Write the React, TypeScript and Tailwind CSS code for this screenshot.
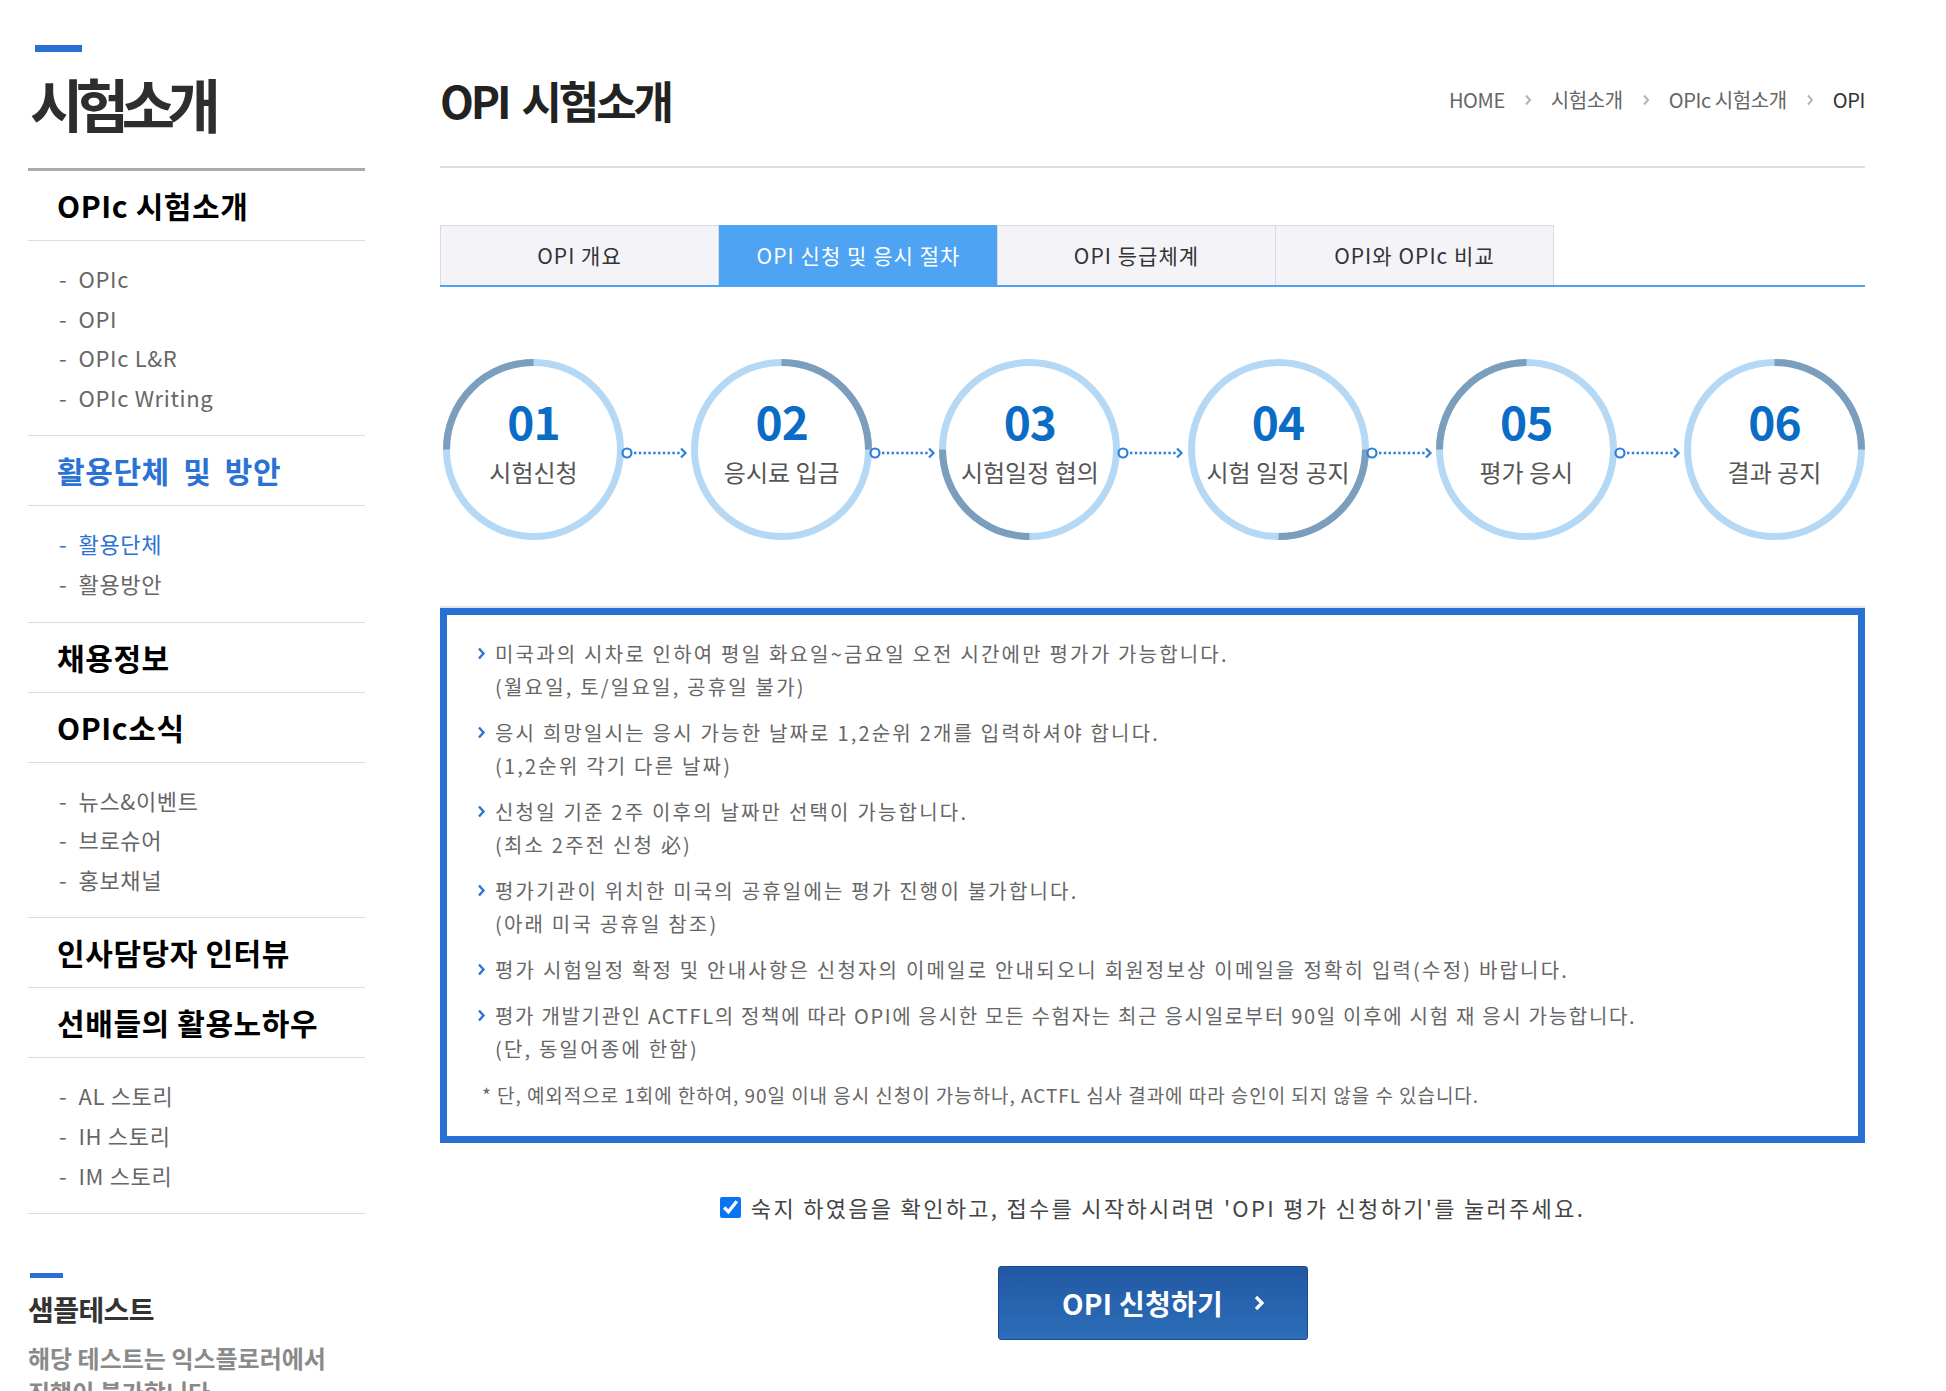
import React from 'react';

const KR = "font-['Noto_Sans_CJK_KR','Noto_Sans',sans-serif]";

type Arc = 'tl' | 'tr' | 'br' | 'bl';

const steps: { no: string; label: string; arc: Arc }[] = [
  { no: '01', label: '시험신청', arc: 'tl' },
  { no: '02', label: '응시료 입금', arc: 'tr' },
  { no: '03', label: '시험일정 협의', arc: 'bl' },
  { no: '04', label: '시험 일정 공지', arc: 'br' },
  { no: '05', label: '평가 응시', arc: 'tl' },
  { no: '06', label: '결과 공지', arc: 'tr' },
];

const arcPath: Record<Arc, string> = {
  tl: 'M 3.5 90.5 A 87 87 0 0 1 90.5 3.5',
  tr: 'M 90.5 3.5 A 87 87 0 0 1 177.5 90.5',
  br: 'M 177.5 90.5 A 87 87 0 0 1 90.5 177.5',
  bl: 'M 90.5 177.5 A 87 87 0 0 1 3.5 90.5',
};

const sideMenu: { title: string; active?: boolean; items?: { label: string; active?: boolean }[] }[] = [
  { title: 'OPIc 시험소개', items: [{ label: 'OPIc' }, { label: 'OPI' }, { label: 'OPIc L&R' }, { label: 'OPIc Writing' }] },
  { title: '활용단체 및 방안', active: true, items: [{ label: '활용단체', active: true }, { label: '활용방안' }] },
  { title: '채용정보' },
  { title: 'OPIc소식', items: [{ label: '뉴스&이벤트' }, { label: '브로슈어' }, { label: '홍보채널' }] },
  { title: '인사담당자 인터뷰' },
  { title: '선배들의 활용노하우', items: [{ label: 'AL 스토리' }, { label: 'IH 스토리' }, { label: 'IM 스토리' }] },
];

const notices: { main: string; sub?: string; tight?: boolean }[] = [
  { main: '미국과의 시차로 인하여 평일 화요일~금요일 오전 시간에만 평가가 가능합니다.', sub: '(월요일, 토/일요일, 공휴일 불가)' },
  { main: '응시 희망일시는 응시 가능한 날짜로 1,2순위 2개를 입력하셔야 합니다.', sub: '(1,2순위 각기 다른 날짜)' },
  { main: '신청일 기준 2주 이후의 날짜만 선택이 가능합니다.', sub: '(최소 2주전 신청 必)' },
  { main: '평가기관이 위치한 미국의 공휴일에는 평가 진행이 불가합니다.', sub: '(아래 미국 공휴일 참조)' },
  { main: '평가 시험일정 확정 및 안내사항은 신청자의 이메일로 안내되오니 회원정보상 이메일을 정확히 입력(수정) 바랍니다.' },
  { main: '평가 개발기관인 ACTFL의 정책에 따라 OPI에 응시한 모든 수험자는 최근 응시일로부터 90일 이후에 시험 재 응시 가능합니다.', sub: '(단, 동일어종에 한함)', tight: true },
];

const tabs = ['OPI 개요', 'OPI 신청 및 응시 절차', 'OPI 등급체계', 'OPI와 OPIc 비교'];

function Sidebar() {
  return (
    <aside className={`w-[337px] shrink-0 pt-[45px] ${KR}`}>
      <div className="ml-[7px] h-[7px] w-[47px] bg-[#2a6fd2]" />
      <h1 className="mt-[22px] pl-[2px] text-[58px] leading-[58px] font-bold tracking-[-0.13em] text-[#2e2e2e]">시험소개</h1>
      <div className="mt-[36px] border-t-[3px] border-[#ababab]" />
      {sideMenu.map((sec) => (
        <div key={sec.title}>
          <div
            className={`flex h-[70px] items-center border-b border-[#dcdcdc] pl-[29px] text-[30px] font-bold tracking-[0.02em] ${
              sec.active ? 'text-[#2a72d4] [word-spacing:6px]' : 'text-black'
            }`}
          >
            {sec.title}
          </div>
          {sec.items && (
            <ul className="border-b border-[#dcdcdc] py-[18px] pl-[31px]">
              {sec.items.map((it) => (
                <li
                  key={it.label}
                  className={`text-[22px] leading-[39.6px] tracking-[0.03em] ${it.active ? 'text-[#2a72d4]' : 'text-[#666]'}`}
                >
                  -&nbsp; {it.label}
                </li>
              ))}
            </ul>
          )}
        </div>
      ))}
      <div className="ml-[2px] mt-[59px] h-[5px] w-[33px] bg-[#2a6fd2]" />
      <h2 className="mt-[13px] text-[28px] leading-[36px] font-bold tracking-[-0.02em] text-[#333]">샘플테스트</h2>
      <p className="mt-[14px] text-[24px] leading-[34px] font-bold tracking-[0em] text-[#8a8a8a]">
        해당 테스트는 익스플로러에서
        <br />
        진행이 불가합니다.
      </p>
    </aside>
  );
}

function Crumb() {
  return (
    <svg width="8" height="12" viewBox="0 0 8 12" className="mx-[19px]">
      <polyline points="2,1.5 6,6 2,10.5" fill="none" stroke="#b4b4b4" strokeWidth="2" />
    </svg>
  );
}

function StepCircle({ no, label, arc }: { no: string; label: string; arc: Arc }) {
  return (
    <div className="relative h-[181px] w-[181px] shrink-0">
      <svg width="181" height="181" viewBox="0 0 181 181" className="absolute inset-0">
        <circle cx="90.5" cy="90.5" r="87" fill="none" stroke="#b5d8f4" strokeWidth="7" />
        <path d={arcPath[arc]} fill="none" stroke="#7c9ebd" strokeWidth="7" />
      </svg>
      <div className="relative flex h-full flex-col items-center justify-center pb-[18px]">
        <span className="text-[46px] leading-[50px] font-bold tracking-[-0.02em] text-[#0b6cc6]">{no}</span>
        <span className="mt-[12px] whitespace-nowrap text-[24px] leading-[30px] tracking-[0em] text-[#555]">{label}</span>
      </div>
    </div>
  );
}

function Connector() {
  return (
    <svg width="73" height="16" viewBox="0 0 73 16" className="relative z-10 -mx-[3px] mt-[7px] shrink-0">
      <circle cx="6" cy="8" r="4.5" fill="#fff" stroke="#2f7fd6" strokeWidth="2.2" />
      <line x1="13" y1="8" x2="60" y2="8" stroke="#2f7fd6" strokeWidth="2.6" strokeDasharray="2.4 2.4" />
      <polyline points="60,3.5 64.5,8 60,12.5" fill="none" stroke="#2f7fd6" strokeWidth="2.2" />
    </svg>
  );
}

function Chevron() {
  return (
    <svg width="9" height="13" viewBox="0 0 9 13" className="shrink-0">
      <polyline points="2,1.5 6.5,6.5 2,11.5" fill="none" stroke="#2e74cf" strokeWidth="2.4" />
    </svg>
  );
}

export default function App() {
  return (
    <div className={`h-[1391px] w-full overflow-hidden bg-white ${KR}`}>
      <div className="flex pl-[28px]">
        <Sidebar />

        <main className="ml-[75px] w-[1425px] shrink-0 pt-[75px]">
          <div className="flex h-[50px] items-center justify-between">
            <h2 className="text-[44px] leading-[50px] font-bold tracking-[-0.07em] text-[#222] [word-spacing:6px]">OPI 시험소개</h2>
            <nav className="flex items-center text-[20px] tracking-[-0.02em] text-[#666]">
              <span>HOME</span>
              <Crumb />
              <span>시험소개</span>
              <Crumb />
              <span>OPIc 시험소개</span>
              <Crumb />
              <span className="text-[#333]">OPI</span>
            </nav>
          </div>
          <div className="mt-[41px] border-t-2 border-[#dcdcdc]" />

          {/* tabs */}
          <div className="mt-[57px] flex border-b-2 border-[#4ea3f2]">
            {tabs.map((t, i) => (
              <div
                key={t}
                className={`flex h-[60px] w-[279px] items-center justify-center border border-b-0 text-[21px] tracking-[0.05em] ${
                  i === 1
                    ? 'border-[#4ea3f2] bg-[#4ea3f2] text-white'
                    : 'border-[#d9dae2] bg-[#f4f4f8] text-[#333]'
                } ${i > 1 ? '-ml-px' : ''}`}
              >
                {t}
              </div>
            ))}
          </div>

          {/* steps */}
          <div className="mt-[72px] flex items-center justify-between pl-[3px]">
            {steps.map((s, i) => (
              <React.Fragment key={s.no}>
                <StepCircle {...s} />
                {i < steps.length - 1 && <Connector />}
              </React.Fragment>
            ))}
          </div>

          {/* notice box */}
          <div className="mt-[68px] border-[7px] border-[#2870d4] pb-[25px] pl-[30px] pt-[22px] shadow-[0_-2px_0_0_#e1e5ea]">
            <ul className="text-[20px] leading-[33px] tracking-[0.11em] text-[#666]">
              {notices.map((n, i) => (
                <li key={i} className={`${i > 0 ? 'mt-[13px]' : ''} ${n.tight ? 'tracking-[0.085em]' : ''}`}>
                  <div className="flex items-center gap-[9px]">
                    <Chevron />
                    <span>{n.main}</span>
                  </div>
                  {n.sub && <div className="pl-[18px] tracking-[0.11em]">{n.sub}</div>}
                </li>
              ))}
              <li className="mt-[13px] pl-[5px] text-[19px] tracking-[0.05em]">
                * 단, 예외적으로 1회에 한하여, 90일 이내 응시 신청이 가능하나, ACTFL 심사 결과에 따라 승인이 되지 않을 수 있습니다.
              </li>
            </ul>
          </div>

          {/* agreement */}
          <label className="mt-[49px] flex h-[30px] items-center justify-center gap-[10px]">
            <input type="checkbox" defaultChecked className="h-[21px] w-[21px] accent-[#0a74f0]" />
            <span className="text-[22px] tracking-[0.105em] text-[#444]">
              숙지 하였음을 확인하고, 접수를 시작하시려면 'OPI 평가 신청하기'를 눌러주세요.
            </span>
          </label>

          <div className="mt-[44px] flex justify-center">
            <button className="flex h-[74px] w-[310px] items-center justify-center gap-[30px] rounded-[3px] border border-[#174a92] bg-gradient-to-b from-[#2358a3] to-[#2b6eb9] pl-[22px] text-[28px] font-bold tracking-[0.01em] text-white">
              <span>OPI 신청하기</span>
              <svg width="12" height="18" viewBox="0 0 12 18">
                <polyline points="3,3 9,9 3,15" fill="none" stroke="#fff" strokeWidth="3.2" />
              </svg>
            </button>
          </div>
        </main>
      </div>
    </div>
  );
}
